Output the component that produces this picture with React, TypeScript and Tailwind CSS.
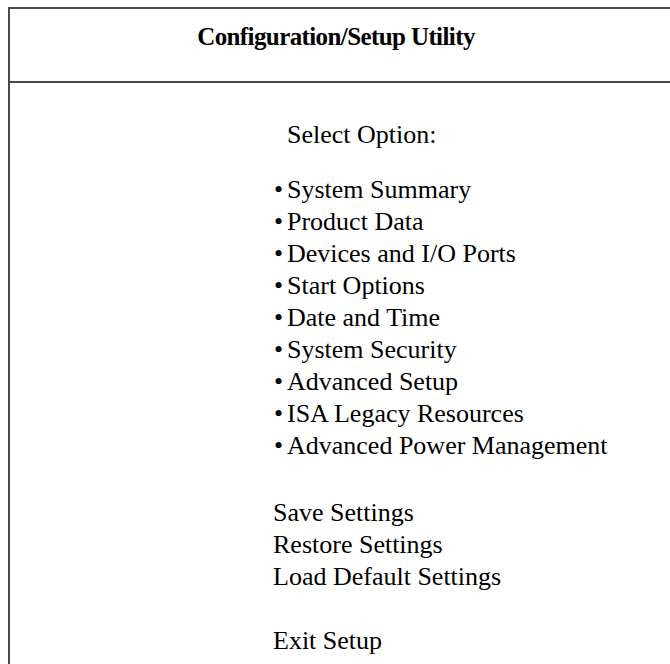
const menuItems = [
  'System Summary',
  'Product Data',
  'Devices and I/O Ports',
  'Start Options',
  'Date and Time',
  'System Security',
  'Advanced Setup',
  'ISA Legacy Resources',
  'Advanced Power Management',
];

const settingsItems = ['Save Settings', 'Restore Settings', 'Load Default Settings'];

export default function App() {
  return (
    <div className="min-h-screen bg-white pl-2 pt-[7px] text-black font-['Liberation_Serif','Times_New_Roman',serif] overflow-hidden">
      <div className="border-l-2 border-t-2 border-[#4a4a4a] min-h-[657px]">
        {/* Title bar */}
        <div className="h-[74px] border-b-2 border-[#4a4a4a] pt-[13px] pr-2 text-center">
          <h1 className="text-[25px] leading-[30px] font-bold tracking-[-0.6px]">
            Configuration/Setup Utility
          </h1>
        </div>

        {/* Options */}
        <div className="pl-[263px] pt-[36px] text-[26px] leading-[32px]">
          <div className="pl-[14px]">Select Option:</div>

          <ul className="mt-[23px]">
            {menuItems.map((item) => (
              <li key={item} className="flex">
                <span className="w-[14px] shrink-0 pl-[1px]">•</span>
                <span>{item}</span>
              </li>
            ))}
          </ul>

          <ul className="mt-[35px]">
            {settingsItems.map((item) => (
              <li key={item}>{item}</li>
            ))}
          </ul>

          <div className="mt-[32px]">Exit Setup</div>
        </div>
      </div>
    </div>
  );
}
